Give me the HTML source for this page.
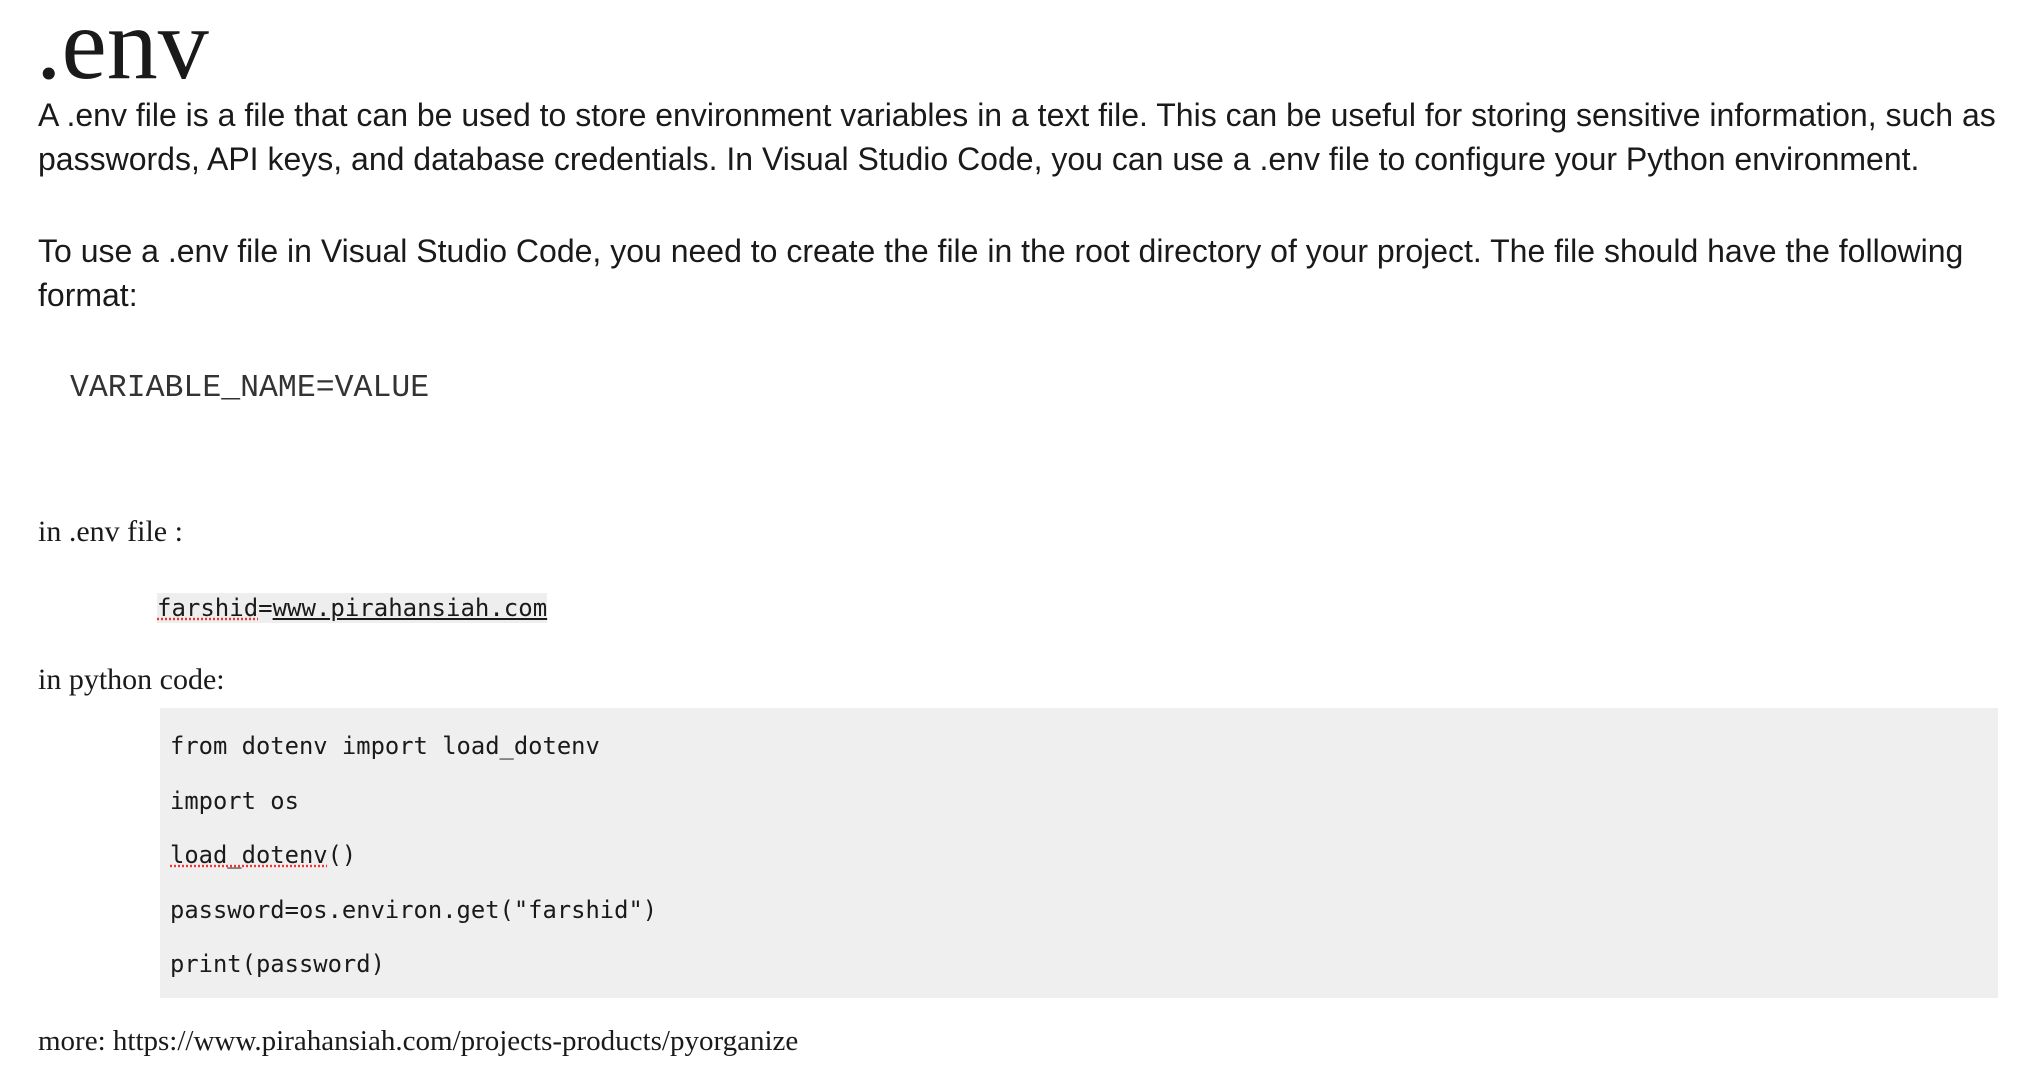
<!DOCTYPE html>
<html><head><meta charset="utf-8"><style>
html,body{margin:0;padding:0;background:#fff;width:2040px;height:1080px;overflow:hidden;color:#1a1a1a}
.a{position:absolute;white-space:nowrap;margin:0}
.s{font-family:"Liberation Sans",sans-serif;font-size:32px}
.sr{font-family:"Liberation Serif",serif}
.m{font-family:"DejaVu Sans Mono","Liberation Mono",monospace}
</style></head><body>
<div class="a sr" style="left:36px;top:-6px;font-size:102px;line-height:102px">.env</div>
<div class="a s" style="left:38px;top:93px;line-height:44px">A .env file is a file that can be used to store environment variables in a text file. This can be useful for storing sensitive information, such as<br>passwords, API keys, and database credentials. In Visual Studio Code, you can use a .env file to configure your Python environment.</div>
<div class="a s" style="left:38px;top:229px;line-height:44px">To use a .env file in Visual Studio Code, you need to create the file in the root directory of your project. The file should have the following<br>format:</div>
<div class="a" style="left:70px;top:371px;font-family:'Liberation Mono',monospace;font-size:31.5px;line-height:36px;color:#333">VARIABLE_NAME=VALUE</div>
<div class="a sr" style="left:38px;top:514px;font-size:30px;line-height:36px">in .env file :</div>
<div class="a m" style="left:157px;top:593px;height:30px;background:#eee;font-size:24px;line-height:30px"><span style="text-decoration:underline dotted #e33">farshid</span>=<span style="text-decoration:underline">www.pirahansiah.com</span></div>
<div class="a sr" style="left:38px;top:662px;font-size:30px;line-height:36px">in python code:</div>
<div class="a" style="left:160px;top:708px;width:1838px;height:290px;background:#efefef"></div>
<div class="a m" style="left:170px;top:719px;font-size:23.8px;line-height:54.5px">from dotenv import load_dotenv<br>import os<br><span style="text-decoration:underline dotted #e33">load_dotenv</span>()<br>password=os.environ.get("farshid")<br>print(password)</div>
<div class="a sr" style="left:38px;top:1024px;font-size:29px;line-height:34px">more: https://www.pirahansiah.com/projects-products/pyorganize</div>
</body></html>
